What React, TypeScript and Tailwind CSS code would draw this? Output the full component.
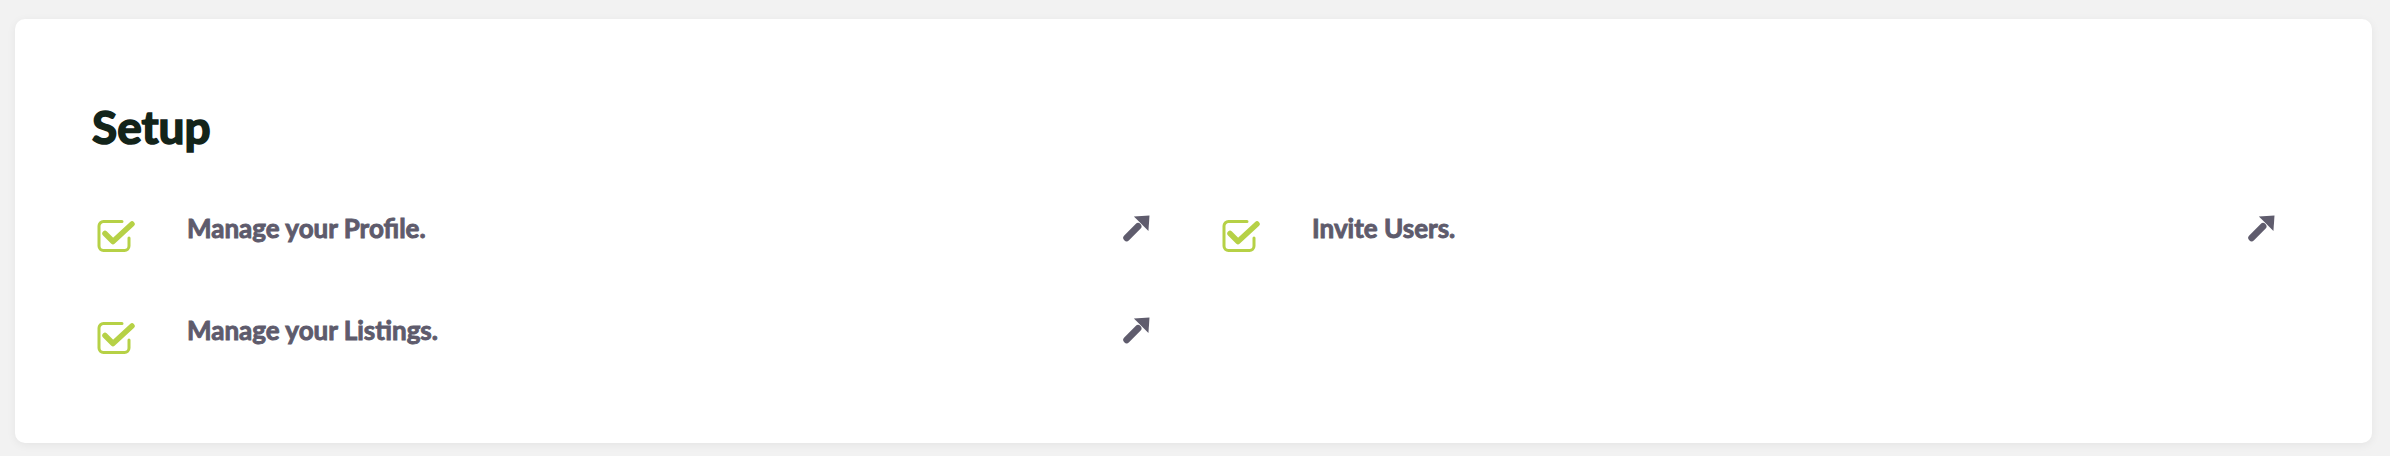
import React from 'react';

const items = [
    { label: 'Manage your Profile.', done: true },
    { label: 'Invite Users.', done: true },
    { label: 'Manage your Listings.', done: true },
];

const CheckSquare = () => (
    <svg width="38" height="34" viewBox="0 0 38 34" fill="none">
        <path
            d="M25 2.5H6.5a4.5 4.5 0 0 0-4.5 4.5v20a4.5 4.5 0 0 0 4.5 4.5h21a4.5 4.5 0 0 0 4.5-4.5V19"
            stroke="#b6d146"
            strokeWidth="3"
            strokeLinecap="round"
        />
        <path
            d="M8 14.5l8 8L35 5"
            stroke="#b6d146"
            strokeWidth="5.5"
            strokeLinecap="round"
            strokeLinejoin="round"
        />
    </svg>
);

const ArrowUpRight = () => (
    <svg width="27" height="27" viewBox="0 0 26 26" fill="none">
        <path d="M3.5 22L14.5 11" stroke="#5f5c6d" strokeWidth="6.5" strokeLinecap="round" />
        <path d="M25.5 0.5L24.5 15.5L10.5 1.5Z" fill="#5f5c6d" strokeLinejoin="round" />
    </svg>
);

const SetupItem = ({ label }: { label: string }) => (
    <div className="flex items-start h-[40px]">
        <div className="w-[95px] pl-[5px] pt-[11px] shrink-0">
            <CheckSquare />
        </div>
        <span className="flex-1 text-[26px] leading-[40px] font-bold text-[#5e5b6c] [-webkit-text-stroke:0.9px_#5e5b6c]">
            {label}
        </span>
        <div className="pt-[7px] pr-[20px]">
            <ArrowUpRight />
        </div>
    </div>
);

export default function App() {
    return (
        <div
            className="w-[2390px] h-[456px] bg-[#f2f2f2] pt-[19px] pl-[15px]"
            style={{ fontFamily: 'Lato, "Noto Sans", sans-serif' }}
        >
            <div className="w-[2357px] h-[424px] bg-white rounded-[10px] shadow-[0_2px_10px_rgba(0,0,0,0.06)] pt-[85px] px-[77px]">
                <h2 className="text-[46px] leading-none font-bold text-[#13241a] [-webkit-text-stroke:1.6px_#13241a]">
                    Setup
                </h2>
                <div className="grid grid-cols-2 gap-x-[47px] gap-y-[62px] mt-[58px]">
                    {items.map((item) => (
                        <SetupItem key={item.label} label={item.label} />
                    ))}
                </div>
            </div>
        </div>
    );
}
